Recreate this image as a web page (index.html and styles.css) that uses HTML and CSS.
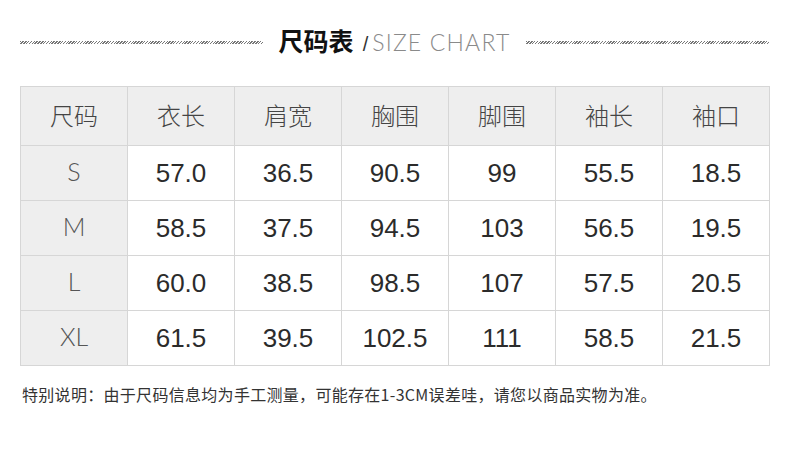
FILE: index.html
```html
<!DOCTYPE html>
<html lang="zh-CN">
<head>
<meta charset="utf-8">
<title>尺码表</title>
<link rel="stylesheet" href="styles.css">
</head>
<body>
<div class="page">
  <div class="heading">
    <span class="hatch"></span>
    <h1 class="title"><span class="cn">尺码表</span><span class="slash">/</span><span class="en">SIZE CHART</span></h1>
    <span class="hatch"></span>
  </div>
  <table class="chart">
    <thead>
      <tr><th>尺码</th><th>衣长</th><th>肩宽</th><th>胸围</th><th>脚围</th><th>袖长</th><th>袖口</th></tr>
    </thead>
    <tbody>
      <tr><th>S</th><td>57.0</td><td>36.5</td><td>90.5</td><td>99</td><td>55.5</td><td>18.5</td></tr>
      <tr><th>M</th><td>58.5</td><td>37.5</td><td>94.5</td><td>103</td><td>56.5</td><td>19.5</td></tr>
      <tr><th>L</th><td>60.0</td><td>38.5</td><td>98.5</td><td>107</td><td>57.5</td><td>20.5</td></tr>
      <tr><th>XL</th><td>61.5</td><td>39.5</td><td>102.5</td><td>111</td><td>58.5</td><td>21.5</td></tr>
    </tbody>
  </table>
  <p class="note">特别说明：由于尺码信息均为手工测量，可能存在1-3CM误差哇，请您以商品实物为准。</p>
</div>
</body>
</html>
```
FILE: styles.css
```css
html, body {
  margin: 0;
  padding: 0;
  background: #ffffff;
}
.page {
  width: 790px;
  height: 450px;
  padding: 28px 21px 0 20px;
  box-sizing: border-box;
  font-family: "Liberation Sans", "Noto Sans CJK SC", sans-serif;
  color: #333;
}
.heading {
  display: flex;
  align-items: center;
  gap: 16px;
  height: 28px;
}
.hatch {
  flex: 1;
  height: 3px;
  background: repeating-linear-gradient(135deg, #555 0 1px, #fff 1px 2px);
  opacity: 0.8;
}
.title {
  margin: 0;
  display: flex;
  align-items: baseline;
  font-weight: normal;
  line-height: 28px;
}
.cn {
  font-family: "Noto Sans CJK SC", sans-serif;
  font-weight: 700;
  font-size: 25px;
  color: #111;
}
.slash {
  font-family: "Liberation Sans", sans-serif;
  font-size: 20px;
  color: #333;
  margin: 0 4px 0 9px;
}
.en {
  font-family: Lato, "Liberation Sans", sans-serif;
  font-weight: 300;
  font-size: 23px;
  color: #8a8a8a;
  letter-spacing: 1.2px;
}
.chart {
  margin-top: 30px;
  border-collapse: collapse;
  table-layout: fixed;
  width: 750px;
}
.chart th, .chart td {
  border: 1px solid #d6d6d6;
  padding: 0;
  text-align: center;
  font-size: 24px;
}
.chart thead th {
  height: 55px;
  padding-bottom: 3px;
  background: #eeeeee;
  font-family: "Noto Sans CJK SC", sans-serif;
  font-weight: 300;
  color: #444;
}
.chart tbody th {
  height: 50px;
  padding-bottom: 4px;
  background: #eeeeee;
  font-family: Lato, "Liberation Sans", sans-serif;
  font-weight: 300;
  font-size: 25px;
  color: #555;
}
.chart tbody td {
  height: 54px;
  font-family: "Liberation Sans", sans-serif;
  font-size: 26px;
  color: #2b2b2b;
}
.note {
  margin: 16px 0 0 2px;
  font-family: "Noto Sans CJK SC", sans-serif;
  font-size: 16px;
  color: #333;
  letter-spacing: 0.3px;
}
```
